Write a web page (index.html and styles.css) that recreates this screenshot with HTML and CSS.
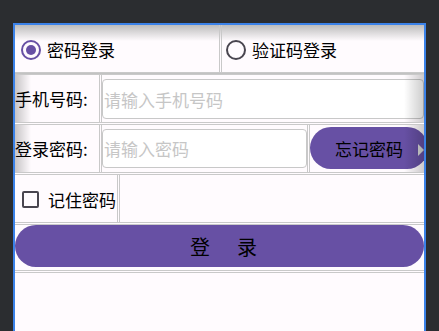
FILE: index.html
```html
<!DOCTYPE html>
<html lang="zh-CN">
<head>
    <meta charset="UTF-8">
    <meta name="viewport" content="width=device-width, initial-scale=1.0">
    <title>登录</title>
    <link rel="stylesheet" href="styles.css">
</head>
<body>
    <div class="device">
        <div class="row row-mode">
            <label class="mode-cell">
                <span class="radio checked"></span>密码登录
            </label>
            <label class="mode-cell mode-cell-right">
                <span class="radio"></span>验证码登录
            </label>
        </div>
        <div class="row row-field fade">
            <div class="field-label">手机号码:</div>
            <div class="field-input">
                <input type="text" placeholder="请输入手机号码">
            </div>
        </div>
        <div class="row row-field fade">
            <div class="field-label">登录密码:</div>
            <div class="field-input field-input-short">
                <input type="password" placeholder="请输入密码">
            </div>
            <div class="forget-cell">
                <button class="forget">忘记密码</button>
            </div>
            <span class="more-arrow"></span>
        </div>
        <div class="row row-remember">
            <label class="remember-cell">
                <span class="checkbox"></span>记住密码
            </label>
        </div>
        <div class="row row-login">
            <button class="login"><span>登</span><span>录</span></button>
        </div>
    </div>
</body>
</html>
```

FILE: styles.css
```css
body {
    margin: 0;
    background-color: #2b2d30;
    font-family: "Noto Sans CJK SC", "Noto Sans", sans-serif;
    color: #000;
}
.device {
    margin: 23px 0 0 13px;
    width: 409px;
    height: 306px;
    background: #fffbfe;
    border: 2px solid #3b82e8;
    border-bottom: none;
    overflow: hidden;
}
.row {
    display: flex;
    position: relative;
    overflow: hidden;
    border-bottom: 3px double #c9c9c9;
    font-size: 17px;
}
.row-mode {
    height: 47px;
    background: linear-gradient(#bcbcbc, #fffbfe 16px);
}
.mode-cell {
    display: flex;
    align-items: center;
    gap: 6px;
    width: 198px;
    padding-left: 6px;
    padding-top: 2px;
    border-right: 3px double #c9c9c9;
}
.mode-cell-right {
    flex: 1;
    padding-left: 4px;
    border-right: none;
}
.radio {
    width: 16px;
    height: 16px;
    border: 2px solid #49454f;
    border-radius: 50%;
    display: flex;
    align-items: center;
    justify-content: center;
}
.radio.checked {
    border-color: #6750a4;
}
.radio.checked::after {
    content: "";
    width: 10px;
    height: 10px;
    border-radius: 50%;
    background: #6750a4;
}
.row-field {
    height: 47px;
}
.field-label {
    width: 84px;
    display: flex;
    align-items: center;
    border-right: 3px double #c9c9c9;
    white-space: nowrap;
}
.field-input {
    flex: 1;
    padding: 4px 0 3px;
}
.field-input input {
    box-sizing: border-box;
    width: 100%;
    height: 40px;
    margin: 0;
    padding: 0 1px;
    border: 1px solid #c8c8c8;
    border-radius: 4px;
    background: #fff;
    font: inherit;
    outline: none;
}
.field-input input::placeholder {
    color: #c6c6c6;
}
.field-input-short {
    flex: none;
    width: 205px;
    padding-top: 4px;
    border-right: 3px double #c9c9c9;
}
.field-input-short input {
    height: 39px;
}
.forget-cell {
    flex: 1;
    min-width: 0;
}
.forget {
    width: 118px;
    height: 42px;
    margin-top: 2px;
    border: none;
    border-radius: 21px;
    background: #6750a4;
    color: #000;
    font: inherit;
    padding: 0;
}
.fade::before,
.fade::after {
    content: "";
    position: absolute;
    top: 0;
    bottom: 0;
    width: 16px;
    pointer-events: none;
}
.fade::before {
    left: 0;
    background: linear-gradient(to right, rgba(0, 0, 0, 0.22), rgba(0, 0, 0, 0));
}
.fade::after {
    right: 0;
    width: 20px;
    background: linear-gradient(to left, rgba(0, 0, 0, 0.2), rgba(0, 0, 0, 0));
}
.more-arrow {
    position: absolute;
    right: 0;
    top: 19px;
    border-top: 6px solid transparent;
    border-bottom: 6px solid transparent;
    border-left: 6px solid #d8d8d8;
}
.row-remember {
    height: 47px;
}
.remember-cell {
    display: flex;
    align-items: center;
    gap: 9px;
    width: 95px;
    padding-left: 7px;
    padding-top: 2px;
    border-right: 3px double #c9c9c9;
}
.checkbox {
    width: 13px;
    height: 13px;
    border: 2px solid #49454f;
    border-radius: 2px;
}
.row-login {
    height: 45px;
}
.login {
    width: 100%;
    height: 42px;
    border: none;
    border-radius: 21px;
    background: #6750a4;
    color: #000;
    font-family: inherit;
    font-size: 20px;
    display: flex;
    align-items: center;
    justify-content: center;
    gap: 27px;
    padding: 0 0 0 8px;
}
```
